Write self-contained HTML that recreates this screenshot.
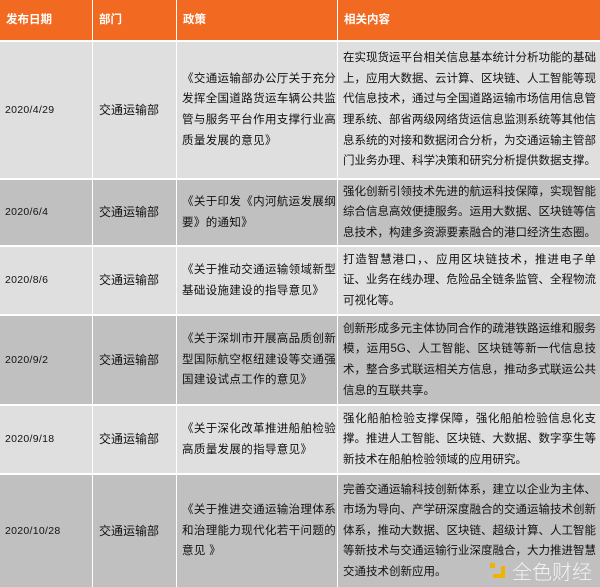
<!DOCTYPE html>
<html><head><meta charset="utf-8"><style>
body{margin:0;width:600px;height:587px;background:#fff;overflow:hidden;font-family:"Liberation Sans","Noto Sans CJK SC","WenQuanYi Zen Hei",sans-serif;color:#111;position:relative}
.c{position:absolute;display:flex;flex-direction:column;justify-content:center;box-sizing:border-box;font-size:11.5px;line-height:20.6px;white-space:nowrap}
.h{background:#f26a22;color:#fff;font-weight:bold;font-size:11.5px;top:0;height:40px;padding-left:6px}
.L{background:#dfdfdf}.D{background:#c0c0c0}
.a{left:0;width:92px;padding-left:5px;font-size:10.5px;letter-spacing:0.3px}
.b{left:93px;width:83px;padding-left:6px;font-size:12px}
.p{left:177px;width:160px;padding-left:5px;letter-spacing:0.35px}
.t{left:338px;width:262px;padding:0 4px 0 5px}
.t div{text-align:justify;text-align-last:justify}
.t div:last-child{text-align-last:left}
</style></head><body>
<div class="c h" style="left:0;width:92px">发布日期</div>
<div class="c h" style="left:93px;width:83px">部门</div>
<div class="c h" style="left:177px;width:160px">政策</div>
<div class="c h" style="left:338px;width:262px">相关内容</div>

<div class="c L a" style="top:42px;height:136px">2020/4/29</div>
<div class="c L b" style="top:42px;height:136px">交通运输部</div>
<div class="c L p" style="top:42px;height:136px"><div>《交通运输部办公厅关于充分</div><div>发挥全国道路货运车辆公共监</div><div>管与服务平台作用支撑行业高</div><div>质量发展的意见》</div></div>
<div class="c L t" style="top:42px;height:136px"><div>在实现货运平台相关信息基本统计分析功能的基础</div><div>上，应用大数据、云计算、区块链、人工智能等现</div><div>代信息技术，通过与全国道路运输市场信用信息管</div><div>理系统、部省两级网络货运信息监测系统等其他信</div><div>息系统的对接和数据闭合分析，为交通运输主管部</div><div>门业务办理、科学决策和研究分析提供数据支撑。</div></div>

<div class="c D a" style="top:180px;height:65px">2020/6/4</div>
<div class="c D b" style="top:180px;height:65px">交通运输部</div>
<div class="c D p" style="top:180px;height:65px"><div>《关于印发《内河航运发展纲</div><div>要》的通知》</div></div>
<div class="c D t" style="top:180px;height:65px"><div>强化创新引领技术先进的航运科技保障，实现智能</div><div>综合信息高效便捷服务。运用大数据、区块链等信</div><div>息技术，构建多资源要素融合的港口经济生态圈。</div></div>

<div class="c L a" style="top:247px;height:67px">2020/8/6</div>
<div class="c L b" style="top:247px;height:67px">交通运输部</div>
<div class="c L p" style="top:247px;height:67px"><div>《关于推动交通运输领域新型</div><div>基础设施建设的指导意见》</div></div>
<div class="c L t" style="top:247px;height:67px"><div>打造智慧港口，、应用区块链技术，推进电子单</div><div>证、业务在线办理、危险品全链条监管、全程物流</div><div>可视化等。</div></div>

<div class="c D a" style="top:316px;height:88px">2020/9/2</div>
<div class="c D b" style="top:316px;height:88px">交通运输部</div>
<div class="c D p" style="top:316px;height:88px"><div>《关于深圳市开展高品质创新</div><div>型国际航空枢纽建设等交通强</div><div>国建设试点工作的意见》</div></div>
<div class="c D t" style="top:316px;height:88px"><div>创新形成多元主体协同合作的疏港铁路运维和服务</div><div>模，运用5G、人工智能、区块链等新一代信息技</div><div>术，整合多式联运相关方信息，推动多式联运公共</div><div>信息的互联共享。</div></div>

<div class="c L a" style="top:406px;height:67px">2020/9/18</div>
<div class="c L b" style="top:406px;height:67px">交通运输部</div>
<div class="c L p" style="top:406px;height:67px"><div>《关于深化改革推进船舶检验</div><div>高质量发展的指导意见》</div></div>
<div class="c L t" style="top:406px;height:67px"><div>强化船舶检验支撑保障，强化船舶检验信息化支</div><div>撑。推进人工智能、区块链、大数据、数字孪生等</div><div>新技术在船舶检验领域的应用研究。</div></div>

<div class="c D a" style="top:475px;height:112px">2020/10/28</div>
<div class="c D b" style="top:475px;height:112px">交通运输部</div>
<div class="c D p" style="top:475px;height:112px"><div>《关于推进交通运输治理体系</div><div>和治理能力现代化若干问题的</div><div>意见 》</div></div>
<div class="c D t" style="top:475px;height:112px"><div>完善交通运输科技创新体系，建立以企业为主体、</div><div>市场为导向、产学研深度融合的交通运输技术创新</div><div>体系，推动大数据、区块链、超级计算、人工智能</div><div>等新技术与交通运输行业深度融合，大力推进智慧</div><div>交通技术创新应用。</div></div>

<div style="position:absolute;left:493px;top:566px;width:12px;height:12px;border-right:4px solid #f0b400;border-bottom:4px solid #f0b400;box-sizing:border-box"></div>
<div style="position:absolute;left:490px;top:563px;width:5px;height:5px;background:#f0b400"></div>
<div style="position:absolute;left:512px;top:558px;font-size:20px;line-height:26px;color:#f4f4f4;white-space:nowrap;font-family:'Noto Sans CJK SC',sans-serif;font-weight:300">全色财经</div>
</body></html>
